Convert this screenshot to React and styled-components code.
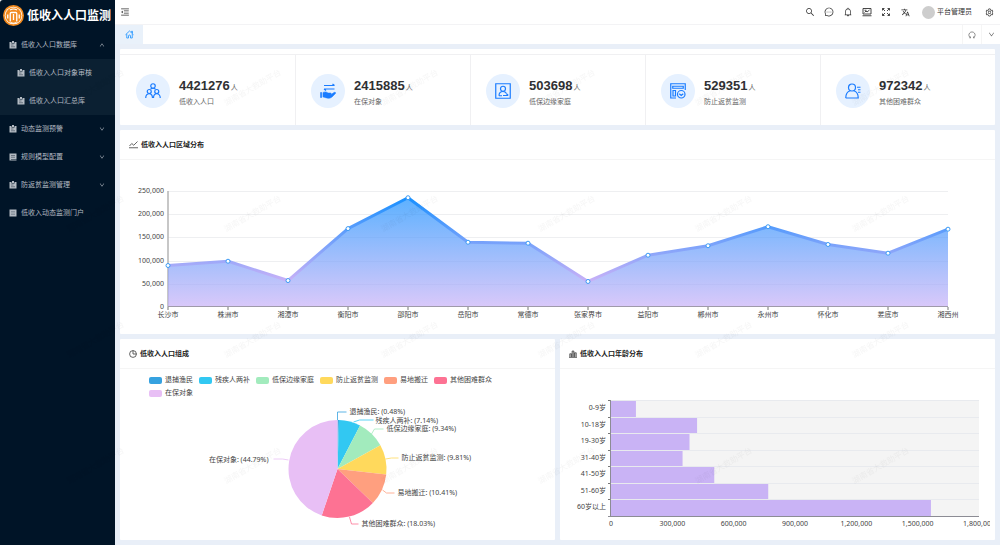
import React, { useLayoutEffect, useRef, useState } from "react";
import styled, { createGlobalStyle } from "styled-components";
import {
  AiOutlineMenuFold,
  AiOutlineSearch,
  AiOutlineMessage,
  AiOutlineBell,
  AiOutlineSetting,
  AiOutlineDown,
  AiOutlineUp,
} from "react-icons/ai";
import { MdTranslate } from "react-icons/md";

const GlobalStyle = createGlobalStyle`
  * { box-sizing: border-box; }
  body {
    margin: 0;
    background: #fff;
    color: #444;
    font: 7px/12px "Noto Sans", "Noto Sans CJK SC", sans-serif;
  }
  button { font: inherit; color: inherit; background: none; border: 0; padding: 0; cursor: pointer; }
  a { color: inherit; text-decoration: none; }
  h1, h2, p, ul { margin: 0; padding: 0; list-style: none; }
  svg { display: block; flex: none; }
`;

const Shell = styled.div`
  display: flex;
  min-height: 100vh;
  background: #e9eff8;
`;

const Sidebar = styled.aside`
  flex: 0 0 115px;
  background: #001427;
  color: #b4bbc3;
  border-top-left-radius: 3px;
`;

const SidebarFrame = styled.div`
  display: flex;
  background: #fff;
`;

const Brand = styled.div`
  display: flex;
  align-items: center;
  gap: 3px;
  height: 31px;
  padding-left: 3px;
`;

const BrandName = styled.h1`
  font-size: 12px;
  line-height: 20px;
  font-weight: 700;
  color: #fff;
  white-space: nowrap;
`;

const MenuRow = styled.button`
  display: flex;
  align-items: center;
  gap: 4px;
  width: 100%;
  height: 28px;
  padding: 0 10px 0 ${(p) => (p.$nested ? 17 : 9)}px;
  text-align: left;
  white-space: nowrap;
`;

const MenuLabel = styled.span`
  flex: 1;
`;

const SubMenu = styled.ul`
  background: #0b2032;
`;

const Main = styled.div`
  flex: 1;
  min-width: 0;
`;

const TopBar = styled.header`
  display: flex;
  align-items: center;
  justify-content: space-between;
  height: 25px;
  padding: 0 6px 0 5px;
  background: #fff;
  border-bottom: 1px solid #f3f3f5;
  color: #333;
`;

const Tools = styled.div`
  display: flex;
  align-items: center;
  gap: 9px;
`;

const IconButton = styled.button`
  display: grid;
  place-items: center;
  width: 10px;
  height: 16px;
`;

const UserButton = styled.button`
  display: flex;
  align-items: center;
  gap: 2px;
  margin: 0 3px;
`;

const Avatar = styled.span`
  width: 13px;
  height: 13px;
  border-radius: 50%;
  background: #cdcdcd;
`;

const TabBar = styled.div`
  display: flex;
  justify-content: space-between;
  height: 19px;
  background: #fff;
`;

const HomeTab = styled.a`
  display: grid;
  place-items: center;
  width: 28px;
  background: #e9f1fa;
  color: #2f9bff;
`;

const TabActions = styled.div`
  display: flex;
`;

const TabAction = styled.button`
  display: grid;
  place-items: center;
  width: 19px;
  border-left: 1px solid #f5f5f5;
  color: #555;
`;

const Content = styled.main`
  display: grid;
  grid-template-columns: minmax(0, 1fr) minmax(0, 1fr);
  gap: 5px;
  padding: 5px;
`;

const Panel = styled.section`
  grid-column: ${(p) => (p.$wide ? "1 / -1" : "auto")};
  background: #fff;
  border-radius: 1px;
`;

const StatList = styled.ul`
  display: grid;
  grid-template-columns: repeat(5, 1fr);
  margin-top: 5px;
  border-top: 1px solid #f0f0f2;
`;

const StatCard = styled.li`
  display: flex;
  align-items: center;
  gap: 9px;
  padding: 19px 0 17px 16px;

  & + & {
    padding-left: 15px;
    border-left: 1px solid #f0f0f2;
  }
`;

const StatIcon = styled.span`
  display: grid;
  place-items: center;
  width: 34px;
  height: 34px;
  border-radius: 50%;
  background: #e6f1ff;
  color: #1a7cff;
`;

const StatText = styled.div`
  padding-top: 4px;
`;

const StatValue = styled.p`
  display: flex;
  align-items: baseline;
  gap: 1px;
  line-height: 16px;
  color: #666;
`;

const StatNumber = styled.strong`
  font: 700 13px/16px "Liberation Sans", sans-serif;
  color: #303133;
`;

const StatLabel = styled.p`
  line-height: 12px;
  color: #666;
`;

const PanelHeader = styled.header`
  display: flex;
  align-items: center;
  gap: 3px;
  height: 30px;
  padding: 0 9px;
  border-bottom: 1px solid #f5f5f5;
`;

const PanelTitle = styled.h2`
  font-size: 7px;
  line-height: 12px;
  font-weight: 700;
  color: #222;
`;

const ChartArea = styled.div`
  height: ${(p) => p.$height}px;
  padding: 0 ${(p) => p.$inset || 0}px;

  svg {
    width: 100%;
    height: 100%;
  }

  text {
    font-size: 7px;
    fill: #444;
    dominant-baseline: central;
  }
`;

const Legend = styled.ul`
  display: flex;
  flex-wrap: wrap;
  column-gap: 6px;
  height: 31px;
  padding: 5px 28px 0 29px;
`;

const LegendItem = styled.li`
  display: flex;
  align-items: center;
  gap: 3px;
  height: 12px;
`;

const Swatch = styled.span`
  width: 13px;
  height: 7px;
  border-radius: 2px;
  background: ${(p) => p.$color};
`;

const WatermarkLayer = styled.svg`
  position: fixed;
  inset: 0;
  width: 100%;
  height: 100%;
  pointer-events: none;

  text {
    font-size: 8px;
    fill: #000;
    fill-opacity: 0.04;
    text-anchor: middle;
  }
`;

function Logo() {
  return (
    <svg width="21" height="21" viewBox="0 0 42 42" aria-hidden="true">
      <circle cx="21" cy="21" r="21" fill="#f28a1e" />
      <circle cx="21" cy="21" r="17.5" fill="#fff" />
      <circle cx="21" cy="21" r="16" fill="#f28a1e" />
      <path
        d="M9.500 27V19M14.500 33V17q0-2 2-2h9q2 0 2 2v16M32.500 27V19M21 18v12"
        fill="none"
        stroke="#fff"
        strokeWidth="2.600"
      />
      <path d="M14 10q7-4 14 0M15 35q6 3 12 0" fill="none" stroke="#fff" strokeWidth="2.400" />
    </svg>
  );
}

function MenuIcon({ kind }) {
  return (
    <svg width="8" height="8" viewBox="0 0 16 16" aria-hidden="true">
      {kind === "clip" && (
        <>
          <path d="M1 2h4v3h6V2h4v13H1z" fill="#b4bbc3" />
          <path d="M6 0h4v4H6z" fill="#b4bbc3" />
          <path d="M4 8h5M4 11.5h8" stroke="#3a4856" strokeWidth="1.2" />
        </>
      )}
      {kind === "book" && (
        <>
          <path d="M1 1h14v11H4v1h11v2H1z" fill="#b4bbc3" />
          <path d="M4 5h8M4 8.5h8" stroke="#3a4856" strokeWidth="1.2" />
        </>
      )}
      {kind === "portal" && (
        <>
          <path d="M1 1h14v14H1z" fill="#b4bbc3" />
          <path d="M4 5h8M4 8h8M4 11h8" stroke="#6b7885" strokeWidth="1.2" />
        </>
      )}
    </svg>
  );
}

function HomeIcon() {
  return (
    <svg width="9" height="9" viewBox="0 0 18 18" fill="none" stroke="currentColor" strokeWidth="1.8" aria-hidden="true">
      <path d="M1 9.500 9 2l8 7.500M13 5V2.500h2V7" />
      <path d="M3.500 8v8h3.500v-4a2 2 0 0 1 4 0v4h3.500V8" />
    </svg>
  );
}

function NoticeIcon() {
  return (
    <svg width="10" height="10" viewBox="0 0 20 20" fill="none" stroke="currentColor" strokeWidth="1.8" aria-hidden="true">
      <path d="M2 3h16v11H2zM1 17.500h18M5 11l3-3 2 2 5-4M5 6.500h4" />
    </svg>
  );
}

function FullscreenIcon() {
  return (
    <svg width="8" height="8" viewBox="0 0 16 16" fill="none" stroke="currentColor" strokeWidth="1.800" aria-hidden="true">
      <path d="M1 5V1h4M1 1l5 5M11 1h4v4M15 1l-5 5M1 11v4h4M1 15l5-5M15 11v4h-4M15 15l-5-5" />
    </svg>
  );
}

function RefreshIcon() {
  return (
    <svg width="8" height="8" viewBox="0 0 16 16" fill="none" stroke="currentColor" strokeWidth="1.300" aria-hidden="true">
      <path d="M5 13.500a6.200 6.200 0 1 1 6 0M2.500 13.500H5V11M13.500 13.500H11V11" />
    </svg>
  );
}

function TrendIcon() {
  return (
    <svg width="9" height="9" viewBox="0 0 18 18" fill="none" stroke="#333" strokeWidth="1.500" aria-hidden="true">
      <path d="M0 15.500h18M1 12l4.500-5 4 3.500L17 3" />
    </svg>
  );
}

function PieIcon() {
  return (
    <svg width="8" height="8" viewBox="0 0 16 16" fill="none" stroke="#333" strokeWidth="1.500" aria-hidden="true">
      <circle cx="8" cy="8" r="6.800" />
      <path d="M8 1v7h7" />
    </svg>
  );
}

function BarsIcon() {
  return (
    <svg width="8" height="8" viewBox="0 0 16 16" fill="#b5b5b5" stroke="#333" strokeWidth="1.300" aria-hidden="true">
      <path d="M0 15h16M1.500 14V7.500h3.500V14M6.200 14V2h3.600v12M11 14V5.500h3.500V14" />
    </svg>
  );
}

const statIcons = {
  people: (
    <g>
      <circle cx="16" cy="6" r="4.500" />
      <circle cx="8.500" cy="17" r="4" />
      <circle cx="23.500" cy="17" r="4" />
      <path d="M1.500 30c0-5 3-8.500 7-8.500s6.500 3.500 6.500 8.500M17 30c0-5 3-8.500 6.500-8.500s7 3.500 7 8.500M11 12.500c1.500-1.500 3-2 5-2s3.500.5 5 2" />
    </g>
  ),
  hand: (
    <g>
      <path d="M8 5h21M25 2l4 3M29 12H8M12 15l-4-3" />
      <path d="M1 19h2.500v10H1z" fill="currentColor" strokeWidth="1" />
      <path
        d="M6 19c4-2 7-1.500 10 1h5c2 0 2 3 0 3h-5 6l6-4c2-1 4 0 3 2l-7 7c-2 2-5 2.500-8 2.500-4 0-6-2.500-10-2.500z"
        fill="currentColor"
        strokeWidth="1"
      />
    </g>
  ),
  frame: (
    <g>
      <path d="M1.500 1.500h29v29h-29z" />
      <circle cx="16" cy="11.500" r="5" />
      <path d="M8 25.500c0-5 3-8.500 8-8.500 3 0 5.500 1.300 7 4M8 25.500h6M16 25h10M23 21.500l3.500 3.500" />
    </g>
  ),
  form: (
    <g>
      <path d="M12 30H1.500V1.500h29V14M5.500 6.500h21v4h-21zM6 15h5v11H6z" />
      <circle cx="22.500" cy="22.500" r="7.500" />
      <path d="M18.500 21.500l4 3.500 4-3.500" />
    </g>
  ),
  person: (
    <g>
      <circle cx="14" cy="9" r="7" />
      <path d="M1.500 30c0-8 4-13 9-14.500M17.500 15.500C23 17 26.500 22 26.500 30h-25M24 8.500h7M26 13.500h5M26 18.500h5" />
    </g>
  ),
};

const stats = [
  { icon: "people", value: "4421276", label: "低收入人口" },
  { icon: "hand", value: "2415885", label: "在保对象" },
  { icon: "frame", value: "503698", label: "低保边缘家庭" },
  { icon: "form", value: "529351", label: "防止返贫监测" },
  { icon: "person", value: "972342", label: "其他困难群众" },
];

const menu = [
  { label: "低收入人口数据库", icon: "clip", open: true, children: ["低收入人口对象审核", "低收入人口汇总库"] },
  { label: "动态监测预警", icon: "clip", open: false },
  { label: "规则模型配置", icon: "book", open: false },
  { label: "防返贫监测管理", icon: "clip", open: false },
  { label: "低收入动态监测门户", icon: "portal" },
];

const regions = [
  ["长沙市", 89400],
  ["株洲市", 98700],
  ["湘潭市", 57000],
  ["衡阳市", 169000],
  ["邵阳市", 235500],
  ["岳阳市", 139600],
  ["常德市", 137500],
  ["张家界市", 55000],
  ["益阳市", 111600],
  ["郴州市", 132000],
  ["永州市", 173000],
  ["怀化市", 134700],
  ["娄底市", 116000],
  ["湘西州", 167700],
];

const groups = [
  { name: "退捕渔民", share: 0.48, color: "#36a2e0", line: "0,-49 0,-57 9,-57", x: 12, y: -58 },
  { name: "残疾人两补", share: 7.14, color: "#32c8f2", line: "16,-47 22,-49 36,-49", x: 38, y: -49 },
  { name: "低保边缘家庭", share: 9.34, color: "#a2ebbd", line: "34,-35 37,-40 46,-40", x: 49, y: -41 },
  { name: "防止返贫监测", share: 9.81, color: "#ffd95c", line: "48,-10 54,-11 61,-11", x: 64, y: -12 },
  { name: "易地搬迁", share: 10.41, color: "#ff9f7f", line: "45,21 49,24 57,24", x: 60, y: 23 },
  { name: "其他困难群众", share: 18.03, color: "#fd7293", line: "12,48 14,55 21,55", x: 24, y: 54 },
  { name: "在保对象", share: 44.79, color: "#e8bff5", line: "-49,-9 -55,-10 -64,-10", x: -69, y: -10, anchor: "end" },
];

const ages = [
  ["0-9岁", 122000],
  ["10-18岁", 421000],
  ["19-30岁", 384000],
  ["31-40岁", 350000],
  ["41-50岁", 505000],
  ["51-60岁", 769000],
  ["60岁以上", 1565000],
];

function useWidth(initial) {
  const ref = useRef(null);
  const [width, setWidth] = useState(initial);
  useLayoutEffect(() => {
    const measure = () => setWidth(ref.current.getBoundingClientRect().width);
    measure();
    const observer = new ResizeObserver(measure);
    observer.observe(ref.current);
    return () => observer.disconnect();
  }, []);
  return [ref, width];
}

function RegionChart() {
  const [ref, width] = useWidth(800);
  const left = 48;
  const right = width - 47;
  const top = 31;
  const bottom = 147;
  const step = (right - left) / (regions.length - 1);
  const points = regions.map(([, value], i) => [left + i * step, bottom - (value / 250000) * (bottom - top)]);
  const path = points.map((p) => p.join(",")).join(" ");
  return (
    <ChartArea $height={174}>
      <svg ref={ref} role="img" aria-label="低收入人口区域分布">
        <defs>
          <linearGradient id="regionLine" x1="0" y1="0" x2="0" y2="1">
            <stop offset="0" stopColor="#1890ff" />
            <stop offset="1" stopColor="#c9b1f7" />
          </linearGradient>
        </defs>
        {[0, 1, 2, 3, 4, 5].map((i) => {
          const y = Math.round(bottom - (i * (bottom - top)) / 5);
          return (
            <g key={i}>
              {i > 0 && <path d={`M${left} ${y + 0.5}H${right}`} stroke="#eeeff1" />}
              <text x={left - 4} y={y - 1} textAnchor="end">
                {(i * 50000).toLocaleString("en-US")}
              </text>
            </g>
          );
        })}
        <path d={`M${left} ${top}V${bottom}`} stroke="#b5b5b5" strokeWidth="1.5" />
        <polygon points={`${left},${bottom} ${path} ${right},${bottom}`} fill="url(#regionLine)" opacity="0.7" />
        <path d={`M${left} ${bottom - 0.5}H${right}`} stroke="#9f9aaa" />
        <polyline points={path} fill="none" stroke="url(#regionLine)" strokeWidth="3" strokeLinejoin="bevel" />
        {points.map(([x, y], i) => (
          <g key={regions[i][0]}>
            <path d={`M${x} ${bottom}v3`} stroke="#777" />
            <circle cx={x} cy={y} r="2" fill="#fff" stroke="#3b9bf5" strokeWidth="1" />
            <text x={x} y={bottom + 7} textAnchor="middle">
              {regions[i][0]}
            </text>
          </g>
        ))}
      </svg>
    </ChartArea>
  );
}

function slicePath(from, to, r) {
  const at = (f) => `${Math.sin(f * 2 * Math.PI) * r} ${-Math.cos(f * 2 * Math.PI) * r}`;
  return `M0 0L${at(from)}A${r} ${r} 0 ${to - from > 0.5 ? 1 : 0} 1 ${at(to)}Z`;
}

function GroupChart() {
  let total = 0;
  return (
    <>
      <Legend>
        {groups.map((g) => (
          <LegendItem key={g.name}>
            <Swatch $color={g.color} />
            {g.name}
          </LegendItem>
        ))}
      </Legend>
      <ChartArea $height={140}>
        <svg role="img" aria-label="低收入人口组成">
          <svg x="50%" y="69" overflow="visible">
            {groups.map((g) => {
              const from = total;
              total += g.share / 100;
              return (
                <g key={g.name}>
                  <path d={slicePath(from, total, 49)} fill={g.color} />
                  <polyline points={g.line} fill="none" stroke={g.color} strokeWidth="0.8" />
                  <text x={g.x} y={g.y} textAnchor={g.anchor || "start"}>
                    {`${g.name}: (${g.share}%)`}
                  </text>
                </g>
              );
            })}
          </svg>
        </svg>
      </ChartArea>
    </>
  );
}

function AgeChart() {
  const [ref, width] = useWidth(400);
  const left = 46;
  const right = width - 11;
  const top = 31;
  const bottom = 147;
  const band = (bottom - top) / ages.length;
  return (
    <ChartArea $height={171} $inset={5}>
      <svg ref={ref} role="img" aria-label="低收入人口年龄分布">
        {ages.map(([name, value], i) => {
          const y = Math.round(top + i * band);
          const next = Math.round(top + (i + 1) * band);
          return (
            <g key={name}>
              <rect x={left} y={y} width={right - left} height={next - y} fill="#f4f4f4" />
              <path d={`M${left} ${y + 0.5}H${right}`} stroke="#e8eaee" />
              <rect
                x={left}
                y={y + 1}
                width={(value / 1800000) * (right - left)}
                height={next - y - 1}
                fill="#c9b3f5"
              />
              <path d={`M${left - 3} ${y + 0.5}h3`} stroke="#777" />
              <text x={left - 5} y={Math.round(y + band / 2) - 1} textAnchor="end">
                {name}
              </text>
            </g>
          );
        })}
        <path d={`M${left - 0.5} ${top}V${bottom}`} stroke="#8c8c94" />
        <path d={`M${left - 3} ${bottom + 0.5}H${right}`} stroke="#8c8c94" />
        {[0, 1, 2, 3, 4, 5, 6].map((i) => (
          <text key={i} x={left + (i * (right - left)) / 6} y={bottom + 7} textAnchor="middle">
            {(i * 300000).toLocaleString("en-US")}
          </text>
        ))}
      </svg>
    </ChartArea>
  );
}

function Watermark() {
  return (
    <WatermarkLayer aria-hidden="true">
      <defs>
        <pattern id="mark" width="157" height="126" patternUnits="userSpaceOnUse">
          <text transform="translate(97 90) rotate(-30)">湖南省大救助平台</text>
        </pattern>
      </defs>
      <rect width="100%" height="100%" fill="url(#mark)" />
    </WatermarkLayer>
  );
}

export default function App() {
  return (
    <>
      <GlobalStyle />
      <Shell>
        <SidebarFrame>
          <Sidebar>
            <Brand>
              <Logo />
              <BrandName>低收入人口监测</BrandName>
            </Brand>
            <nav>
              <ul>
                {menu.map((item) => (
                  <li key={item.label}>
                    <MenuRow type="button" aria-expanded={item.open}>
                      <MenuIcon kind={item.icon} />
                      <MenuLabel>{item.label}</MenuLabel>
                      {item.open === true && <AiOutlineUp size={6} />}
                      {item.open === false && <AiOutlineDown size={6} />}
                    </MenuRow>
                    {item.children && (
                      <SubMenu>
                        {item.children.map((child) => (
                          <li key={child}>
                            <MenuRow as="a" href="#" $nested>
                              <MenuIcon kind="clip" />
                              <MenuLabel>{child}</MenuLabel>
                            </MenuRow>
                          </li>
                        ))}
                      </SubMenu>
                    )}
                  </li>
                ))}
              </ul>
            </nav>
          </Sidebar>
        </SidebarFrame>
        <Main>
          <TopBar>
            <IconButton type="button" aria-label="折叠菜单">
              <AiOutlineMenuFold size={10} />
            </IconButton>
            <Tools>
              <IconButton type="button" aria-label="搜索"><AiOutlineSearch size={10} /></IconButton>
              <IconButton type="button" aria-label="消息"><AiOutlineMessage size={10} /></IconButton>
              <IconButton type="button" aria-label="通知"><AiOutlineBell size={10} /></IconButton>
              <IconButton type="button" aria-label="公告"><NoticeIcon /></IconButton>
              <IconButton type="button" aria-label="全屏"><FullscreenIcon /></IconButton>
              <IconButton type="button" aria-label="语言"><MdTranslate size={9} /></IconButton>
              <UserButton type="button">
                <Avatar />
                平台管理员
              </UserButton>
              <IconButton type="button" aria-label="设置"><AiOutlineSetting size={9} /></IconButton>
            </Tools>
          </TopBar>
          <TabBar>
            <HomeTab href="#" aria-label="首页"><HomeIcon /></HomeTab>
            <TabActions>
              <TabAction type="button" aria-label="刷新"><RefreshIcon /></TabAction>
              <TabAction type="button" aria-label="更多"><AiOutlineDown size={7} /></TabAction>
            </TabActions>
          </TabBar>
          <Content>
            <Panel $wide>
              <StatList>
                {stats.map((s) => (
                  <StatCard key={s.label}>
                    <StatIcon>
                      <svg width="16" height="16" viewBox="0 0 32 32" fill="none" stroke="currentColor" strokeWidth="2.4">
                        {statIcons[s.icon]}
                      </svg>
                    </StatIcon>
                    <StatText>
                      <StatValue>
                        <StatNumber>{s.value}</StatNumber>人
                      </StatValue>
                      <StatLabel>{s.label}</StatLabel>
                    </StatText>
                  </StatCard>
                ))}
              </StatList>
            </Panel>
            <Panel $wide>
              <PanelHeader>
                <TrendIcon />
                <PanelTitle>低收入人口区域分布</PanelTitle>
              </PanelHeader>
              <RegionChart />
            </Panel>
            <Panel>
              <PanelHeader>
                <PieIcon />
                <PanelTitle>低收入人口组成</PanelTitle>
              </PanelHeader>
              <GroupChart />
            </Panel>
            <Panel>
              <PanelHeader>
                <BarsIcon />
                <PanelTitle>低收入人口年龄分布</PanelTitle>
              </PanelHeader>
              <AgeChart />
            </Panel>
          </Content>
        </Main>
      </Shell>
      <Watermark />
    </>
  );
}
